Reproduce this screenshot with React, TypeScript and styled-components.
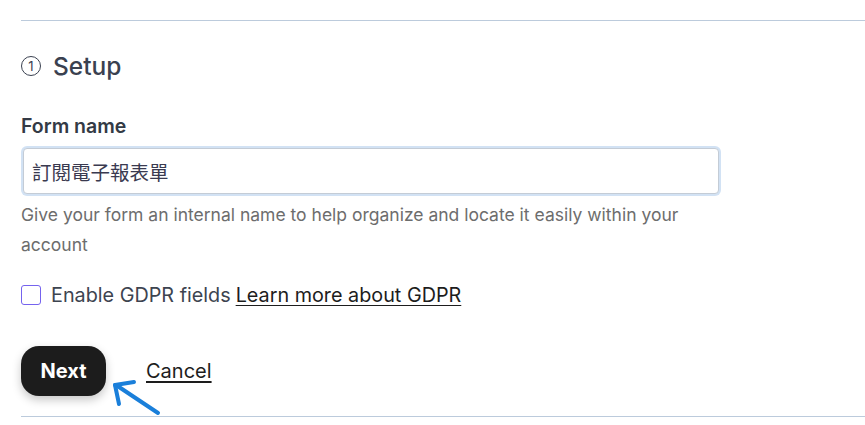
import React from "react";
import styled, { createGlobalStyle } from "styled-components";

const Global = createGlobalStyle`
  html, body { margin: 0; padding: 0; background: #ffffff; }
  body { font-family: Inter, "Noto Sans CJK TC", "Liberation Sans", sans-serif; }
  * { box-sizing: border-box; }
`;

const Page = styled.div`
  position: relative;
  width: 865px;
  height: 425px;
  overflow: hidden;
  padding: 20px 0 0 21px;
  display: flex;
  flex-direction: column;
`;

const Divider = styled.div<{ $gap?: number }>`
  height: 1px;
  background: #bccbdc;
  margin-top: ${(p) => p.$gap ?? 0}px;
  width: 100%;
  flex-shrink: 0;
`;

const Heading = styled.h2`
  margin: 25px 0 0;
  height: 40px;
  display: flex;
  align-items: center;
  gap: 12px;
  font-size: 24.5px;
  font-weight: 500;
  color: #3a4150;
`;

const StepNum = styled.span`
  width: 20px;
  height: 20px;
  border: 1.5px solid #3a4150;
  border-radius: 50%;
  display: inline-flex;
  align-items: center;
  justify-content: center;
  font-size: 13px;
  font-weight: 400;
  line-height: 1;
`;

const Label = styled.label`
  margin-top: 28px;
  font-size: 19.5px;
  line-height: 24px;
  font-weight: 600;
  color: #333a45;
`;

const Input = styled.input`
  margin: 10px 0 0 2px;
  width: 696px;
  height: 46px;
  border: 1px solid #c4ccd6;
  border-radius: 4px;
  box-shadow: 0 0 0 2px #d2e2f4;
  padding: 0 10px 0 8px;
  font-family: "Noto Sans CJK TC", Inter, sans-serif;
  font-size: 19.5px;
  font-weight: 400;
  color: #3a3a50;
  outline: none;
  background: #fff;
`;

const Help = styled.p`
  margin: 6px 0 0;
  width: 700px;
  font-size: 17.5px;
  line-height: 30px;
  color: #6d6d6d;
`;

const CheckRow = styled.div`
  margin-top: 23px;
  display: flex;
  align-items: center;
  gap: 10px;
  height: 24px;
  font-size: 19.8px;
  color: #3d4450;
`;

const Box = styled.span`
  width: 20px;
  height: 20px;
  border: 1.5px solid #7563ee;
  border-radius: 3px;
  flex-shrink: 0;
`;

const Link = styled.a`
  color: #1d1d1d;
  text-decoration: underline;
  text-underline-offset: 3px;
  margin-left: 5px;
`;

const Actions = styled.div`
  margin-top: 39px;
  display: flex;
  align-items: center;
  gap: 40px;
`;

const NextButton = styled.button`
  width: 85px;
  height: 50px;
  border: none;
  border-radius: 18px;
  background: #1c1c1c;
  color: #ffffff;
  font-family: Inter, sans-serif;
  font-size: 20px;
  font-weight: 700;
  box-shadow: 0 4px 10px rgba(0, 0, 0, 0.22);
`;

const Cancel = styled.a`
  font-size: 20px;
  color: #1d1d1d;
  text-decoration: underline;
  text-underline-offset: 3px;
`;

const Arrow = styled.svg`
  position: absolute;
  left: 105px;
  top: 375px;
`;

export default function App() {
  return (
    <>
      <Global />
      <Page>
        <Divider />
        <Heading>
          <StepNum>1</StepNum>
          Setup
        </Heading>
        <Label>Form name</Label>
        <Input defaultValue="訂閱電子報表單" />
        <Help>
          Give your form an internal name to help organize and locate it easily within your account
        </Help>
        <CheckRow>
          <Box />
          <span>
            Enable GDPR fields<Link>Learn more about GDPR</Link>
          </span>
        </CheckRow>
        <Actions>
          <NextButton>Next</NextButton>
          <Cancel>Cancel</Cancel>
        </Actions>
        <Divider $gap={20} />
        <Arrow width="60" height="45" viewBox="0 0 60 45">
          <g stroke="#1a7fda" strokeWidth="4" strokeLinecap="round" fill="none">
            <line x1="11" y1="10" x2="53" y2="38" />
            <line x1="10" y1="10" x2="29" y2="7" />
            <line x1="10" y1="10" x2="14" y2="29" />
          </g>
        </Arrow>
      </Page>
    </>
  );
}
